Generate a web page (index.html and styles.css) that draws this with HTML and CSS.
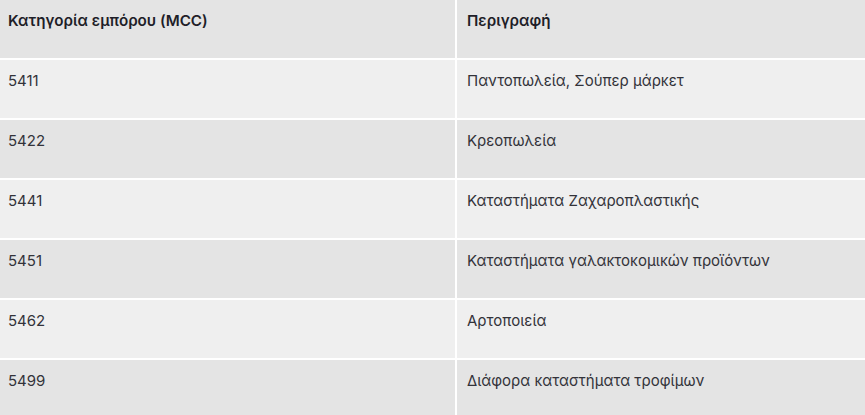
FILE: index.html
```html
<!DOCTYPE html>
<html lang="el">
<head>
<meta charset="utf-8">
<title>MCC</title>
<link rel="stylesheet" href="styles.css">
</head>
<body>
<div class="table">
  <div class="cell head">Κατηγορία εμπόρου (MCC)</div>
  <div class="cell head col2">Περιγραφή</div>
  <div class="cell odd">5411</div>
  <div class="cell odd col2">Παντοπωλεία, Σούπερ μάρκετ</div>
  <div class="cell even">5422</div>
  <div class="cell even col2">Κρεοπωλεία</div>
  <div class="cell odd">5441</div>
  <div class="cell odd col2">Καταστήματα Ζαχαροπλαστικής</div>
  <div class="cell even">5451</div>
  <div class="cell even col2">Καταστήματα γαλακτοκομικών προϊόντων</div>
  <div class="cell odd">5462</div>
  <div class="cell odd col2">Αρτοποιεία</div>
  <div class="cell even">5499</div>
  <div class="cell even col2">Διάφορα καταστήματα τροφίμων</div>
</div>
</body>
</html>
```
FILE: styles.css
```css
html, body {
  margin: 0;
  padding: 0;
  background: #ffffff;
}
.table {
  display: grid;
  grid-template-columns: 455px 1fr;
  grid-auto-rows: 58px;
  gap: 2px;
  background: #ffffff;
  font-family: Inter, "Noto Sans", sans-serif;
  font-size: 15px;
  color: #33333a;
}
.cell {
  padding: 11px 8px 0 8px;
  line-height: 20px;
}
.col2 {
  padding-left: 10px;
}
.head {
  background: #e4e4e4;
  font-weight: 600;
  font-size: 15.2px;
  color: #1e1e28;
}
.odd {
  background: #efefef;
}
.even {
  background: #e4e4e4;
}
```
